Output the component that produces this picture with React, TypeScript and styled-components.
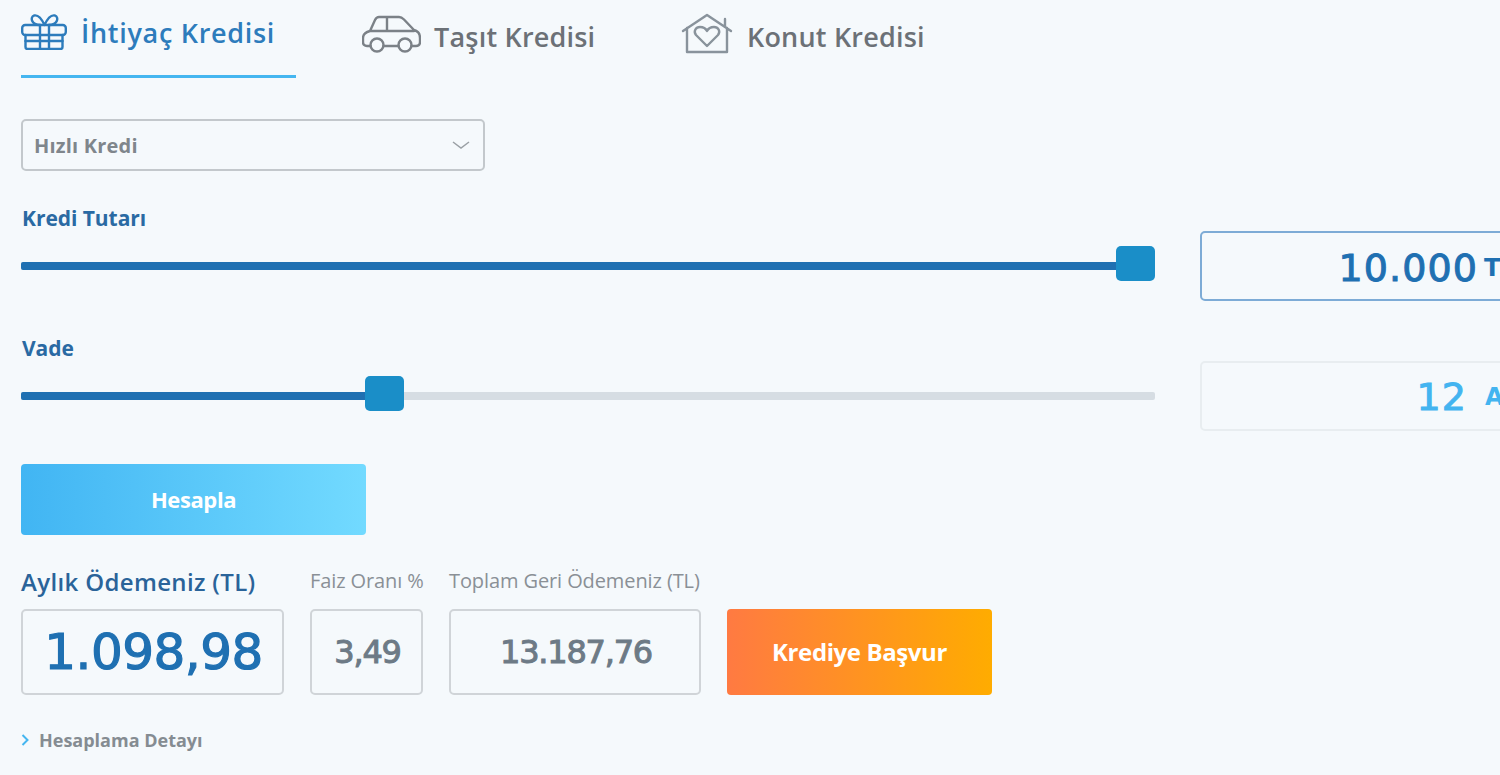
import React from "react";
import styled, { createGlobalStyle } from "styled-components";

const GlobalStyle = createGlobalStyle`
    html, body {
        margin: 0;
        padding: 0;
        height: 100%;
        overflow: hidden;
        background: #f5f9fc;
    }
    body {
        font-family: "Open Sans", "Noto Sans", sans-serif;
    }
`;

const Page = styled.div`
    width: 1500px;
    height: 775px;
    overflow: hidden;
    padding-left: 21px;
    box-sizing: border-box;
    background: #f5f9fc;
`;

const Tabs = styled.div`
    display: flex;
    gap: 66px;
    height: 78px;
`;

const Tab = styled.div<{ $active?: boolean; $width: number; $gap: number; $top: number }>`
    display: flex;
    align-items: flex-start;
    box-sizing: border-box;
    width: ${(p) => p.$width}px;
    height: 78px;
    gap: ${(p) => p.$gap}px;
    padding-top: ${(p) => p.$top}px;
    color: ${(p) => (p.$active ? "#2d7cbc" : "#6c7177")};
    border-bottom: 3px solid ${(p) => (p.$active ? "#45b6f0" : "transparent")};
`;

const TabLabel = styled.span<{ $top: number; $active?: boolean }>`
    font-size: 27px;
    font-weight: 600;
    line-height: 34px;
    letter-spacing: ${(p) => (p.$active ? 0.7 : 0.2)}px;
    margin-top: ${(p) => p.$top}px;
    white-space: nowrap;
`;

const TabIcon = styled.svg<{ $stroke: string }>`
    flex: none;
    fill: none;
    stroke: ${(p) => p.$stroke};
    stroke-width: 2.4;
    stroke-linecap: round;
    stroke-linejoin: round;
`;

const Select = styled.div`
    display: flex;
    align-items: center;
    justify-content: space-between;
    box-sizing: border-box;
    width: 464px;
    height: 52px;
    margin-top: 41px;
    padding: 0 13px 0 11px;
    border: 2px solid #c3c8cc;
    border-radius: 5px;
    font-size: 20px;
    font-weight: 700;
    letter-spacing: 0.2px;
    color: #7f868c;
`;

const FieldLabel = styled.div`
    margin-top: 34px;
    padding-left: 1px;
    height: 26px;
    line-height: 26px;
    font-size: 21px;
    font-weight: 700;
    letter-spacing: -0.05px;
    color: #2a6aa3;
`;

const SliderRow = styled.div`
    display: flex;
    align-items: center;
    gap: 45px;
`;

const Track = styled.div`
    position: relative;
    flex: none;
    width: 1134px;
    height: 8px;
    background: #d6dde3;
    border-radius: 2px;
`;

const TrackFill = styled.div`
    height: 100%;
    background: #1f70b2;
    border-radius: 2px;
`;

const Thumb = styled.div`
    position: absolute;
    top: -16px;
    width: 39px;
    height: 35px;
    border-radius: 5px;
    background: #1a8ec8;
`;

const ValueBox = styled.div<{ $active?: boolean }>`
    display: flex;
    align-items: center;
    flex: none;
    box-sizing: border-box;
    width: 420px;
    height: 70px;
    padding-top: ${(p) => (p.$active ? 4 : 2)}px;
    border: 2px solid ${(p) => (p.$active ? "#7dabd6" : "#e8edf0")};
    border-radius: 5px;
    color: ${(p) => (p.$active ? "#1f70b2" : "#43b4f0")};
`;

const ValueText = styled.span<{ $width: number }>`
    width: ${(p) => p.$width}px;
    text-align: right;
    font-family: "DejaVu Sans", sans-serif;
    font-size: 38px;
    font-weight: 400;
    -webkit-text-stroke: 1px currentColor;
    letter-spacing: 1.1px;
`;

const Unit = styled.span<{ $left: number }>`
    margin-left: ${(p) => p.$left}px;
    font-family: "DejaVu Sans", sans-serif;
    font-size: 24px;
    font-weight: 700;
`;

const CalcButton = styled.div`
    display: flex;
    align-items: center;
    justify-content: center;
    width: 345px;
    height: 71px;
    margin-top: 33px;
    padding-bottom: 2px;
    box-sizing: border-box;
    border-radius: 4px;
    background: linear-gradient(90deg, #41b5f3, #72daff);
    color: #fff;
    font-size: 22px;
    font-weight: 700;
    letter-spacing: -0.4px;
`;

const Results = styled.div`
    display: flex;
    align-items: flex-end;
    gap: 26px;
    margin-top: 30px;
`;

const ResultColumn = styled.div<{ $width: number }>`
    display: flex;
    flex-direction: column;
    flex: none;
    width: ${(p) => p.$width}px;
`;

const ResultLabel = styled.div<{ $main?: boolean }>`
    height: 44px;
    line-height: ${(p) => (p.$main ? 34 : 32)}px;
    white-space: nowrap;
    font-size: ${(p) => (p.$main ? 24 : 20)}px;
    font-weight: ${(p) => (p.$main ? 600 : 400)};
    letter-spacing: ${(p) => (p.$main ? 0.35 : -0.1)}px;
    color: ${(p) => (p.$main ? "#2a6399" : "#8a9096")};
`;

const ResultBox = styled.div`
    display: flex;
    align-items: center;
    justify-content: center;
    box-sizing: border-box;
    height: 86px;
    padding-left: 2px;
    border: 2px solid #d0d4d8;
    border-radius: 5px;
`;

const ResultValue = styled.span<{ $main?: boolean }>`
    font-family: "DejaVu Sans", sans-serif;
    font-size: ${(p) => (p.$main ? 50 : 32)}px;
    -webkit-text-stroke: ${(p) => (p.$main ? 1.2 : 1)}px currentColor;
    letter-spacing: ${(p) => (p.$main ? -0.5 : -1.2)}px;
    color: ${(p) => (p.$main ? "#1f70b2" : "#6d7a86")};
`;

const ApplyButton = styled.div`
    display: flex;
    align-items: center;
    justify-content: center;
    width: 265px;
    height: 86px;
    padding-bottom: 2px;
    box-sizing: border-box;
    border-radius: 4px;
    background: linear-gradient(90deg, #ff7a42, #ffac00);
    color: #fff;
    font-size: 24px;
    font-weight: 700;
    letter-spacing: -0.4px;
`;

const DetailLink = styled.div`
    display: flex;
    align-items: center;
    gap: 9px;
    margin-top: 33px;
    font-size: 18px;
    font-weight: 700;
    color: #858c92;
`;

const GiftIcon = () => (
    <TabIcon $stroke="#2d7cbc" width="46" height="36" viewBox="0 0 46 36">
        <rect x="1.2" y="11" width="43.6" height="10" rx="3" />
        <path d="M4.5 21v12a2 2 0 0 0 2 2h33a2 2 0 0 0 2-2V21" />
        <path d="M19 11v24M28 11v24M4.5 27h37" />
        <path d="M19 11C10 11 9 3 13 1.500c4-1 8 4 10.500 9.500C26 5.500 30 .5 34 1.500c4 1.500 3 9.500-6 9.500" />
    </TabIcon>
);

const CarIcon = () => (
    <TabIcon $stroke="#7b8187" width="59" height="38" viewBox="0 0 59 38">
        <circle cx="15" cy="30" r="6.500" />
        <circle cx="43" cy="30" r="6.500" />
        <path d="M8.500 31H5c-2.500 0-4-1.500-4-4v-4c0-4 3-6 7-7L13 5c1-2 2-3 4-3h20c2 0 3.500 1 5 2.500L52 15c4 1 6 4 6 8v4c0 2.500-1.500 4-4 4h-4.500M21.500 31h15M8 16h44M25 2v14" />
    </TabIcon>
);

const HomeIcon = () => (
    <TabIcon $stroke="#89939c" width="52" height="41" viewBox="0 0 52 41">
        <path d="M2 18 26 2l24 16M44 6v8M6 15v24h40V15" />
        <path d="M26 33 15 22c-3-4 0-8 4-8 3 0 6 2 7 4 1-2 4-4 7-4 4 0 7 4 4 8z" />
    </TabIcon>
);

export default function App() {
    return (
        <Page>
            <GlobalStyle />
            <Tabs>
                <Tab $active $width={275} $gap={14} $top={14}>
                    <GiftIcon />
                    <TabLabel $active $top={2}>İhtiyaç Kredisi</TabLabel>
                </Tab>
                <Tab $width={253} $gap={13} $top={15}>
                    <CarIcon />
                    <TabLabel $top={5}>Taşıt Kredisi</TabLabel>
                </Tab>
                <Tab $width={300} $gap={14} $top={13}>
                    <HomeIcon />
                    <TabLabel $top={7}>Konut Kredisi</TabLabel>
                </Tab>
            </Tabs>
            <Select>
                Hızlı Kredi
                <svg width="18" height="8" viewBox="0 0 18 8" fill="none" stroke="#9aa0a5" strokeWidth="1.500">
                    <path d="M1 1l8 6 8-6" />
                </svg>
            </Select>
            <FieldLabel>Kredi Tutarı</FieldLabel>
            <SliderRow>
                <Track>
                    <TrackFill style={{ width: "100%" }} />
                    <Thumb style={{ left: 1095 }} />
                </Track>
                <ValueBox $active>
                    <ValueText $width={276}>10.000</ValueText>
                    <Unit $left={6}>TL</Unit>
                </ValueBox>
            </SliderRow>
            <FieldLabel>Vade</FieldLabel>
            <SliderRow>
                <Track>
                    <TrackFill style={{ width: 350 }} />
                    <Thumb style={{ left: 344 }} />
                </Track>
                <ValueBox>
                    <ValueText $width={265}>12</ValueText>
                    <Unit $left={18}>Ay</Unit>
                </ValueBox>
            </SliderRow>
            <CalcButton>Hesapla</CalcButton>
            <Results>
                <ResultColumn $width={263}>
                    <ResultLabel $main>Aylık Ödemeniz (TL)</ResultLabel>
                    <ResultBox>
                        <ResultValue $main>1.098,98</ResultValue>
                    </ResultBox>
                </ResultColumn>
                <ResultColumn $width={113}>
                    <ResultLabel>Faiz Oranı %</ResultLabel>
                    <ResultBox>
                        <ResultValue>3,49</ResultValue>
                    </ResultBox>
                </ResultColumn>
                <ResultColumn $width={252}>
                    <ResultLabel>Toplam Geri Ödemeniz (TL)</ResultLabel>
                    <ResultBox>
                        <ResultValue>13.187,76</ResultValue>
                    </ResultBox>
                </ResultColumn>
                <ApplyButton>Krediye Başvur</ApplyButton>
            </Results>
            <DetailLink>
                <svg width="9" height="12" viewBox="0 0 9 12" fill="none" stroke="#45b6f0" strokeWidth="2">
                    <path d="M1.500 1l5 5-5 5" />
                </svg>
                Hesaplama Detayı
            </DetailLink>
        </Page>
    );
}
